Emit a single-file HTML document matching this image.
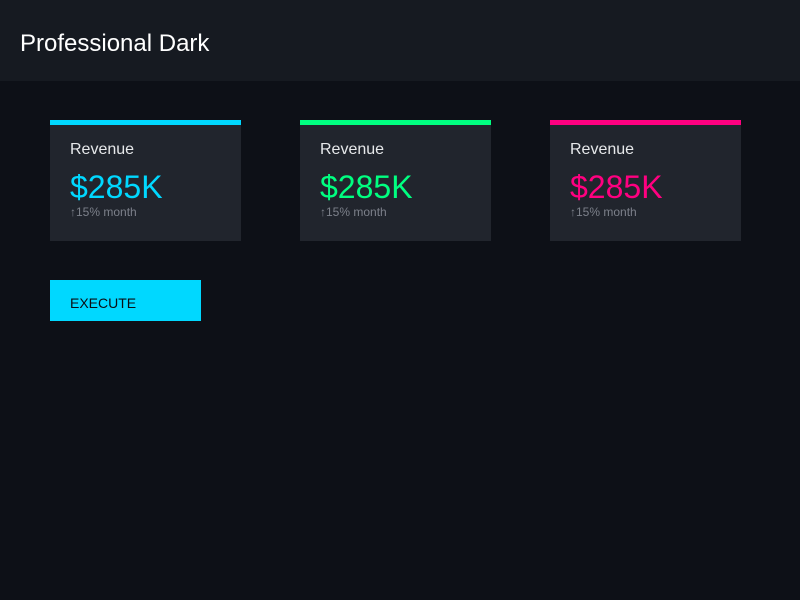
<!DOCTYPE html>
<html><head><style>
*{margin:0;padding:0;box-sizing:border-box}
body{width:800px;height:600px;background:#0d1017;font-family:"Liberation Sans",sans-serif;position:relative;overflow:hidden}
.hd{position:absolute;left:0;top:0;width:800px;height:81px;background:#161a21}
.hd h1{position:absolute;left:20px;top:30px;font-size:24px;font-weight:normal;color:#fff;line-height:28px}
.card{position:absolute;top:120px;width:191px;height:121px;background:#21252d}
.card .bar{height:5px}
.card .t{position:absolute;left:20px;top:20px;font-size:16px;color:#e6e8ea;line-height:19px}
.card .v{position:absolute;left:20px;top:49px;font-size:32px;line-height:37px}
.card .s{position:absolute;left:20px;top:85px;font-size:12px;color:#7c808a;line-height:14px}
.btn{position:absolute;left:50px;top:280px;width:151px;height:41px;background:#00d8ff;color:#0b0e14;font-size:14px;padding:15px 20px;line-height:16px}
</style></head><body>
<div class="hd"><h1>Professional Dark</h1></div>
<div class="card" style="left:50px"><div class="bar" style="background:#00d8ff"></div><div class="t">Revenue</div><div class="v" style="color:#00d8ff">$285K</div><div class="s">↑15% month</div></div>
<div class="card" style="left:300px"><div class="bar" style="background:#00ff80"></div><div class="t">Revenue</div><div class="v" style="color:#00ff80">$285K</div><div class="s">↑15% month</div></div>
<div class="card" style="left:550px"><div class="bar" style="background:#ff0080"></div><div class="t">Revenue</div><div class="v" style="color:#ff0080">$285K</div><div class="s">↑15% month</div></div>
<div class="btn">EXECUTE</div>
</body></html>
